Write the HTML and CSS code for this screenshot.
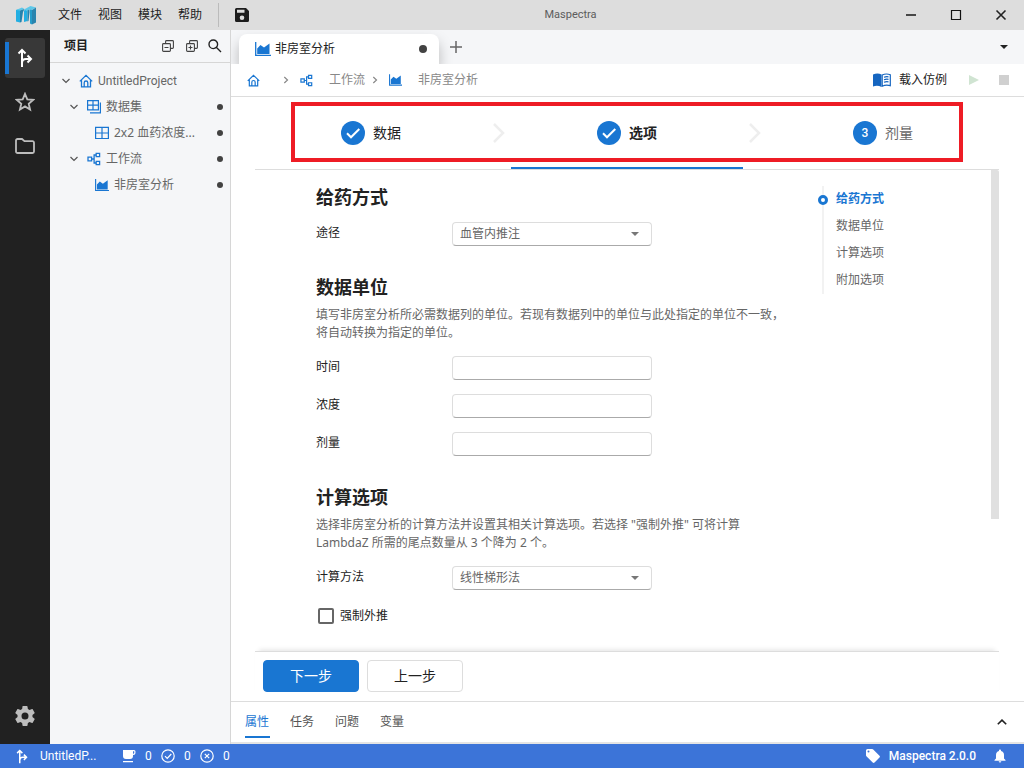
FILE: index.html
```html
<!DOCTYPE html>
<html lang="zh-CN">
<head>
<meta charset="utf-8">
<title>Maspectra</title>
<link rel="stylesheet" href="styles.css">
</head>
<body>
<svg class="defs" aria-hidden="true">
  <symbol id="home" viewBox="0 0 14 14"><path d="M.8 7.4 7 1.4l6.2 6M2.5 6.2v6.6h9V6.2M5.2 12.6V8.8a1.8 1.8 0 0 1 3.6 0v3.8" fill="none" stroke="currentColor" stroke-width="1.3"/></symbol>
  <symbol id="flow" viewBox="0 0 14 14"><path d="M1 5.200h3.600v3.600H1zM9.200 1.400h3.400v3.200H9.200zM9.200 9.400h3.400v3.200H9.200zM4.600 7h2.500M9.200 3H7.100v8h2.100" fill="none" stroke="currentColor" stroke-width="1.300"/></symbol>
  <symbol id="chart" viewBox="0 0 16 14"><path d="M.7 0v13.3H16" fill="none" stroke="currentColor" stroke-width="1.3"/><path d="M2.200 12V6.500L5.500 3 9 5.600 14.500 1.500V12z" fill="currentColor"/></symbol>
  <symbol id="fork" viewBox="0 0 16 20"><path d="M5 19V3M1.500 5.500 5 2l3.500 3.500M5 15c0-3 1-4 4-4h4M10.500 7.500 14 11l-3.500 3.500" fill="none" stroke="currentColor" stroke-width="2"/></symbol>
  <symbol id="caret" viewBox="0 0 8 8"><path d="M.5 2 4 5.500 7.500 2" fill="none" stroke="currentColor" stroke-width="1.2"/></symbol>
  <symbol id="tri" viewBox="0 0 8 4"><path d="M0 0h8L4 4z" fill="currentColor"/></symbol>
  <symbol id="check" viewBox="0 0 24 24"><path d="m6 12.300 4 4 8.300-8.300" fill="none" stroke="currentColor" stroke-width="2"/></symbol>
</svg>
<div class="app">
  <header class="titlebar">
    <svg class="logo" viewBox="0 0 20 19"><path d="M0 4 4 3v13.500L0 15.500z" fill="#22aee2"/><path d="M0 4 6 1.500 8.500 3 4 4.500z" fill="#5cc8ea"/><path d="M4 4.500 8.500 3 7 6 5.500 16 4 16.500z" fill="#2583ad"/><path d="M8 4.500 11.500 3v12L8 16z" fill="#22aee2"/><path d="M8 3.500 14.500 0l5.500 1.500-4.500 2.500-2-.5-2.500 1.500z" fill="#5cc8ea"/><path d="M11.500 4.500 13.500 3.500v3L12.500 15l-1 .5z" fill="#2583ad"/><path d="M14 3.500l2 .5v14.500l-2-1z" fill="#249cca"/><path d="M16 4 20 1.500v15L16 18.500z" fill="#2a84ae"/></svg>
    <nav class="menu">
      <button type="button">文件</button><button type="button">视图</button><button type="button">模块</button><button type="button">帮助</button>
    </nav>
    <button type="button" class="save" aria-label="保存"><svg viewBox="0 0 14 14" width="14" height="14"><path fill-rule="evenodd" fill="currentColor" d="M1.500 0H11l3 3v9.500a1.500 1.500 0 0 1-1.500 1.500h-11A1.500 1.500 0 0 1 0 12.500v-11A1.500 1.500 0 0 1 1.500 0zM2 1.700v3h7.500v-3zM7 7.500a2.300 2.300 0 1 0 0 4.600 2.300 2.300 0 0 0 0-4.600z"/></svg></button>
    <h1 class="title">Maspectra</h1>
    <div class="window">
      <button type="button" aria-label="最小化"><svg viewBox="0 0 12 12"><path d="M1 6h10" stroke="#222" stroke-width="1.600"/></svg></button>
      <button type="button" aria-label="最大化"><svg viewBox="0 0 12 12"><path d="M1.500 1.500h9v9h-9z" fill="none" stroke="#111" stroke-width="1.200"/></svg></button>
      <button type="button" aria-label="关闭"><svg viewBox="0 0 12 12"><path d="m1.500 1.500 9 9M10.500 1.500l-9 9" stroke="#222" stroke-width="1.600"/></svg></button>
    </div>
  </header>

  <div class="body">
    <nav class="rail">
      <button type="button" class="on" aria-label="项目"><svg width="16" height="20"><use href="#fork"/></svg></button>
      <button type="button" aria-label="收藏"><svg width="20" height="20" viewBox="2 2 20 20"><path d="m12 3.800 2.300 5.500 5.900.5-4.500 3.900 1.400 5.800-5.100-3.100-5.100 3.100 1.400-5.800-4.500-3.900 5.900-.5z" fill="none" stroke="currentColor" stroke-width="1.800"/></svg></button>
      <button type="button" aria-label="文件夹"><svg width="20" height="16" viewBox="0 0 20 16"><path d="M1 2.500A1.500 1.500 0 0 1 2.500 1H7l2.500 2.200h8A1.500 1.500 0 0 1 19 4.700v8.800a1.500 1.500 0 0 1-1.500 1.500h-15A1.500 1.500 0 0 1 1 13.500z" fill="none" stroke="currentColor" stroke-width="1.800"/></svg></button>
      <button type="button" class="gear" aria-label="设置"><svg width="24" height="24" viewBox="0 0 24 24"><path fill="currentColor" d="M19.430 12.980c.04-.32.07-.64.07-.98s-.03-.66-.07-.98l2.110-1.650c.19-.15.24-.42.12-.64l-2-3.460c-.12-.22-.39-.3-.61-.22l-2.490 1c-.52-.4-1.080-.73-1.690-.98l-.38-2.650A.49.49 0 0 0 14 2h-4c-.25 0-.46.18-.49.42l-.38 2.650c-.61.25-1.170.59-1.690.98l-2.490-1c-.23-.09-.49 0-.61.22l-2 3.460c-.13.22-.07.49.12.64l2.110 1.650c-.04.32-.07.65-.07.98s.03.66.07.98l-2.110 1.650c-.19.15-.24.42-.12.64l2 3.460c.12.22.39.3.61.22l2.490-1c.52.4 1.080.73 1.690.98l.38 2.650c.03.24.24.42.49.42h4c.25 0 .46-.18.49-.42l.38-2.650c.61-.25 1.170-.59 1.690-.98l2.490 1c.23.09.49 0 .61-.22l2-3.460c.12-.22.07-.49-.12-.64zM12 15.500a3.500 3.500 0 1 1 0-7 3.500 3.500 0 0 1 0 7z"/></svg></button>
    </nav>

    <aside class="side">
      <div class="side-head">
        <h2>项目</h2>
        <button type="button" aria-label="全部折叠"><svg width="12" height="12" viewBox="0 0 12 12"><path d="M1.500 3.600h6q.9 0 .9.900v6q0 .9-.9.900h-6q-.9 0-.9-.9v-6q0-.9.900-.9zM3.600 3.400V1.500q0-.9.900-.9h6q.9 0 .9.900v6q0 .9-.9.900H8.600M2.500 7.500h4" fill="none" stroke="currentColor" stroke-width="1.100"/></svg></button>
        <button type="button" aria-label="全部展开"><svg width="12" height="12" viewBox="0 0 12 12"><path d="M1.500 3.600h6q.9 0 .9.900v6q0 .9-.9.900h-6q-.9 0-.9-.9v-6q0-.9.900-.9zM3.600 3.400V1.500q0-.9.900-.9h6q.9 0 .9.900v6q0 .9-.9.900H8.600M2.500 7.500h4M4.500 5.500v4" fill="none" stroke="currentColor" stroke-width="1.100"/></svg></button>
        <button type="button" aria-label="搜索"><svg width="14" height="14" viewBox="0 0 14 14"><path d="m8.500 8.500 4.500 4.500M9.600 5.300a4.300 4.300 0 1 1-8.600 0 4.300 4.300 0 0 1 8.600 0z" fill="none" stroke="#222" stroke-width="1.400"/></svg></button>
      </div>
      <ul class="tree">
        <li class="lv0"><svg class="caret"><use href="#caret"/></svg><svg class="ic"><use href="#home"/></svg><span>UntitledProject</span></li>
        <li class="lv1"><svg class="caret"><use href="#caret"/></svg><svg class="ic" viewBox="0 0 14 14"><path d="M.6.6h10.800v9.300H.6zM.6 5.200h10.800M6 .6v9.300M13.400 2.500v10.300H3" fill="none" stroke="currentColor" stroke-width="1.200"/></svg><span>数据集</span><i class="dot"></i></li>
        <li class="lv2"><svg class="ic" viewBox="0 0 14 14"><path d="M.6 1.300h12.800v11.200H.6zM.6 7h12.800M7 1.300v11.200" fill="none" stroke="currentColor" stroke-width="1.200"/></svg><span class="mixed">2x2 血药浓度...</span><i class="dot"></i></li>
        <li class="lv1"><svg class="caret"><use href="#caret"/></svg><svg class="ic"><use href="#flow"/></svg><span>工作流</span><i class="dot"></i></li>
        <li class="lv2"><svg class="ic"><use href="#chart"/></svg><span>非房室分析</span><i class="dot"></i></li>
      </ul>
    </aside>

    <main class="main">
      <div class="tabs">
        <button type="button" class="tab"><svg width="16" height="14"><use href="#chart"/></svg><span>非房室分析</span><i class="dot"></i></button>
        <button type="button" class="add" aria-label="新建标签"><svg width="12" height="12" viewBox="0 0 12 12"><path d="M6 0v12M0 6h12" stroke="#666" stroke-width="1.500"/></svg></button>
        <button type="button" class="more" aria-label="更多标签"><svg width="8" height="4"><use href="#tri"/></svg></button>
      </div>

      <div class="crumbs">
        <a href="#" aria-label="主页"><svg width="13" height="13"><use href="#home"/></svg></a>
        <svg class="sep" viewBox="0 0 8 8"><path d="M2.300 1 5.500 4 2.300 7" fill="none" stroke="currentColor" stroke-width="1.200"/></svg>
        <a href="#"><svg width="13" height="13"><use href="#flow"/></svg><span>工作流</span></a>
        <svg class="sep" viewBox="0 0 8 8"><path d="M2.300 1 5.500 4 2.300 7" fill="none" stroke="currentColor" stroke-width="1.200"/></svg>
        <a href="#"><svg width="13" height="12"><use href="#chart"/></svg><span>非房室分析</span></a>
        <button type="button" class="load"><svg width="18" height="14" viewBox="0 0 18 14"><path d="M0 1.500Q4.500-.5 8.500 1.500V14Q4.500 11.800 0 13.500z" fill="#1565c0"/><path d="M9.200 2Q13 .2 17.300 1.700v11Q13 11.500 9.200 13.200zM11 4.200q2-.8 4.500-.4M11 6.700q2-.8 4.500-.4M11 9.200q2-.8 4.500-.4" fill="none" stroke="#1565c0" stroke-width="1.200"/></svg>载入仿例</button>
        <button type="button" aria-label="运行" disabled><svg width="10" height="10" viewBox="0 0 10 10"><path d="M0 0v10l10-5z" fill="#d0e4d2"/></svg></button>
        <button type="button" aria-label="停止" disabled><svg width="10" height="10" viewBox="0 0 10 10"><path d="M0 0h10v10H0z" fill="#d0d0d0"/></svg></button>
      </div>

      <section class="wizard">
        <ol class="steps">
          <li class="step"><b><svg width="24" height="24"><use href="#check"/></svg></b>数据</li>
          <li class="arrow"><svg width="12" height="20" viewBox="0 0 12 20"><path d="m1 1 9 9-9 9" fill="none" stroke="#eee" stroke-width="2.500"/></svg></li>
          <li class="step now"><b><svg width="24" height="24"><use href="#check"/></svg></b>选项</li>
          <li class="arrow"><svg width="12" height="20" viewBox="0 0 12 20"><path d="m1 1 9 9-9 9" fill="none" stroke="#eee" stroke-width="2.500"/></svg></li>
          <li class="step next"><b>3</b>剂量</li>
        </ol>
        <div class="highlight"></div>

        <div class="scroll">
          <form class="form">
            <section class="group">
              <h3>给药方式</h3>
              <div class="row"><label for="route">途径</label><div class="pick"><select id="route"><option>血管内推注</option></select><svg><use href="#tri"/></svg></div></div>
            </section>
            <section class="group">
              <h3>数据单位</h3>
              <p>填写非房室分析所必需数据列的单位。若现有数据列中的单位与此处指定的单位不一致，将自动转换为指定的单位。</p>
              <div class="row"><label for="time">时间</label><input type="text" id="time"></div>
              <div class="row"><label for="conc">浓度</label><input type="text" id="conc"></div>
              <div class="row"><label for="dose">剂量</label><input type="text" id="dose"></div>
            </section>
            <section class="group">
              <h3>计算选项</h3>
              <p>选择非房室分析的计算方法并设置其相关计算选项。若选择 "强制外推" 可将计算 LambdaZ 所需的尾点数量从 3 个降为 2 个。</p>
              <div class="row"><label for="method">计算方法</label><div class="pick"><select id="method"><option>线性梯形法</option></select><svg><use href="#tri"/></svg></div></div>
              <div class="row"><label class="tick"><input type="checkbox">强制外推</label></div>
            </section>
          </form>
          <nav class="anchors">
            <a href="#" class="on">给药方式</a><a href="#">数据单位</a><a href="#">计算选项</a><a href="#">附加选项</a>
          </nav>
          <div class="bar"><div class="thumb"></div></div>
        </div>

        <div class="actions"><button type="button" class="primary">下一步</button><button type="button">上一步</button></div>
      </section>

      <div class="panel">
        <button type="button" class="on">属性</button><button type="button">任务</button><button type="button">问题</button><button type="button">变量</button>
        <button type="button" class="up" aria-label="展开"><svg width="10" height="6" viewBox="0 0 10 6"><path d="m.8 5.300 4.200-4.200 4.200 4.200" fill="none" stroke="#222" stroke-width="1.600"/></svg></button>
      </div>
    </main>
  </div>

  <footer class="status">
    <svg width="12" height="15"><use href="#fork"/></svg><span class="name">UntitledP...</span>
    <svg width="14" height="14" viewBox="0 0 14 14"><path fill="currentColor" fill-rule="evenodd" d="M1 1h11a1.500 1.500 0 0 1 1.500 1.500v1A2.500 2.500 0 0 1 11 6v1a3 3 0 0 1-3 3H4a3 3 0 0 1-3-3zm10 1.200v2.600a1.200 1.200 0 0 0 1.300-1.200v-1a.5.500 0 0 0-.5-.4zM1 12h10v1.300H1z"/></svg><span class="num">0</span>
    <svg width="14" height="14" viewBox="0 0 14 14"><g fill="none" stroke="currentColor" stroke-width="1.200"><circle cx="7" cy="7" r="6.200"/><path d="m4 7.200 2.200 2.200L10.300 5"/></g></svg><span class="num">0</span>
    <svg width="14" height="14" viewBox="0 0 14 14"><g fill="none" stroke="currentColor" stroke-width="1.200"><circle cx="7" cy="7" r="6.200"/><path d="m4.800 4.800 4.400 4.400M9.200 4.800 4.800 9.200"/></g></svg><span class="num">0</span>
    <div class="right">
      <svg width="14" height="14" viewBox="0 0 14 14"><path fill="currentColor" fill-rule="evenodd" d="M1.500 0h4.700q.6 0 1 .4l6.300 6.300q.9.900 0 1.800l-5 5q-.9.900-1.800 0L.4 7.200Q0 6.800 0 6.200V1.500Q0 0 1.500 0zm1 1.500a1 1 0 1 0 0 2 1 1 0 0 0 0-2z"/></svg><span class="ver">Maspectra 2.0.0</span>
      <svg width="12" height="14" viewBox="0 0 12 14"><path fill="currentColor" d="M6 .5c.6 0 1 .4 1 1v.4c2 .5 3 2 3 4V9.500l1.500 1.500v.7H.5V11L2 9.500V5.900c0-2 1-3.500 3-4v-.4c0-.6.4-1 1-1zM4.700 12.300h2.600a1.300 1.300 0 0 1-2.600 0z"/></svg>
    </div>
  </footer>
</div>
</body>
</html>
```

FILE: styles.css
```css
*, *::before { box-sizing: border-box; }
body {
  margin: 0;
  font: 12px/18px Roboto, "Noto Sans CJK SC", sans-serif;
  color: #222;
  background: #fff;
}
button { font: inherit; color: inherit; background: none; border: 0; padding: 0; }
button, a { display: flex; align-items: center; }
a { color: inherit; text-decoration: none; }
h1, h2, h3, p, ul, ol { margin: 0; padding: 0; list-style: none; }
svg { flex: none; display: block; }
.defs { position: absolute; width: 0; height: 0; }
.dot { flex: none; width: 6px; height: 6px; border-radius: 50%; background: #424242; }

.app { display: flex; flex-direction: column; height: 100vh; }
.body { flex: 1; display: flex; min-height: 0; }

.titlebar { display: flex; align-items: center; height: 30px; background: #ddd; }
.logo { width: 20px; height: 19px; margin: 0 22px 0 16px; }
.menu { display: flex; gap: 16px; padding-right: 16px; }
.save { height: 24px; padding: 0 4px 0 16px; border-left: 1px solid #bbb; color: #1c1c1c; }
.title { flex: 1; text-align: center; font-size: 11px; font-weight: 400; color: #5c5c5c; }
.window { display: flex; padding-right: 1px; }
.window button { width: 45px; height: 30px; justify-content: center; }
.window svg { width: 12px; height: 12px; }

.rail { display: flex; flex-direction: column; gap: 4px; width: 50px; padding: 8px 5px; background: #212121; color: #bdbdbd; }
.rail button { width: 40px; height: 40px; justify-content: center; border-radius: 3px; }
.rail .on { position: relative; background: #383838; color: #fff; }
.rail .on::before { content: ""; position: absolute; left: 0; top: 4px; width: 4px; height: 32px; background: #1976d2; }
.rail .gear { margin-top: auto; }

.side { width: 181px; background: #f5f6f8; border-right: 1px solid #d6d6d6; }
.side-head { display: flex; align-items: center; gap: 12px; height: 33px; padding: 0 8px 0 14px; border-bottom: 1px solid #d6d6d6; color: #424242; }
.side-head h2 { flex: 1; font-size: 12px; font-weight: 700; color: #222; }
.side-head button:last-child { margin-left: -2px; }
.tree { padding: 5px 7px 0 12px; color: #666; }
.tree li { display: flex; align-items: center; height: 26px; }
.tree span { flex: 1; white-space: nowrap; padding-left: 5px; }
.tree .mixed, .group p { font-family: "Noto Sans", "Noto Sans CJK SC", sans-serif; }
.tree .ic { width: 14px; height: 14px; color: #1976d2; }
.tree .caret { width: 8px; height: 8px; margin-right: 9px; color: #555; }
.tree .lv1 { padding-left: 8px; }
.tree .lv2 { padding-left: 33px; }

.main { flex: 1; display: flex; flex-direction: column; min-width: 0; }
.tabs { display: flex; align-items: center; height: 34px; padding: 0 16px 0 8px; background: #f5f6f8; overflow: hidden; }
.tab { align-self: flex-end; width: 200px; height: 30px; padding: 0 12px 0 16px; gap: 4px; border-radius: 8px 8px 0 0; background: #fff; box-shadow: 0 8px 14px rgba(0, 0, 0, .25); }
.tab svg { color: #1976d2; }
.tab span { flex: 1; text-align: left; }
.tab .dot { width: 8px; height: 8px; }
.add { margin-left: 11px; }
.more { margin-left: auto; }

.crumbs { display: flex; align-items: center; height: 33px; padding: 0 15px 0 16px; border-bottom: 1px solid #ddd; color: #888; }
.crumbs a { gap: 16px; }
.crumbs a svg { color: #1976d2; }
.crumbs .sep { width: 8px; height: 8px; margin: 0 10px 0 6px; }
.crumbs a:first-child { padding-right: 16px; }
.crumbs button { margin-left: 20px; }
.crumbs .load { gap: 8px; margin-left: auto; color: #222; }
.crumbs .load + button { margin-left: 22px; }

.wizard { position: relative; flex: 1; display: flex; flex-direction: column; min-height: 0; padding: 0 25px 0 24px; }
.steps { display: flex; height: 73px; border-bottom: 1px solid #ddd; font-size: 14px; }
.step { flex: 1; display: flex; align-items: center; justify-content: center; gap: 8px; border-bottom: 2px solid transparent; border-top: 2px solid transparent; }
.step b { display: flex; align-items: center; justify-content: center; width: 24px; height: 24px; border-radius: 50%; background: #1976d2; color: #fff; font-size: 12px; font-weight: 500; }
.now { border-bottom-color: #1976d2; font-weight: 700; }
.next { color: #666; }
.arrow { display: flex; align-items: center; justify-content: center; width: 24px; }
.highlight { position: absolute; left: 60px; right: 61px; top: 5px; height: 60px; border: 4px solid #ee1c25; pointer-events: none; }

.scroll { flex: 1; display: flex; min-height: 0; overflow: hidden; }
.form { width: 533px; padding: 16px 0 0 61px; }
.group { margin-bottom: 30px; }
.group h3 { font-size: 18px; line-height: 24px; font-weight: 700; }
.group p { margin: 6px 0 14px; color: #666; }
.row { display: flex; align-items: flex-start; height: 24px; margin-bottom: 14px; line-height: 22px; }
.row > label:first-child { width: 136px; }
h3 + .row { margin-top: 12px; }
.row input[type="text"], select { width: 200px; height: 24px; padding: 0 7px; border: 1px solid #ddd; border-bottom-color: #aaa; border-radius: 4px; background: #fff; font: inherit; color: #666; }
select { appearance: none; padding-bottom: 2px; }
.pick { position: relative; }
.pick svg { position: absolute; right: 13px; top: 10px; width: 8px; height: 4px; color: #777; pointer-events: none; }
.row > .tick:first-child { display: flex; align-items: center; gap: 6px; height: 24px; padding-left: 2px; }
.tick input { appearance: none; width: 16px; height: 16px; margin: 0; border: 2px solid #666; border-radius: 2px; }

.anchors { align-self: flex-start; margin: 16px auto 0 34px; border-left: 2px solid #f2f2f2; color: #666; }
.anchors a { position: relative; height: 27px; padding: 0 0 2px 12px; }
.anchors .on { font-weight: 700; color: #1976d2; }
.anchors .on::before { content: ""; position: absolute; left: -6px; top: 9px; width: 10px; height: 10px; border: 3px solid #1976d2; border-radius: 50%; background: #fff; }
.bar { width: 8px; }
.thumb { height: 349px; background: #e0e0e0; border-radius: 0 2px 0 0; }

.actions { display: flex; gap: 8px; padding: 8px 8px 9px; border-top: 1px solid #ddd; box-shadow: 0 -5px 5px -4px rgba(0, 0, 0, .12); font-size: 14px; }
.actions button { justify-content: center; width: 96px; height: 32px; border: 1px solid #ddd; border-radius: 4px; }
.actions .primary { background: #1976d2; border-color: #1976d2; color: #fff; }

.panel { display: flex; gap: 20px; height: 43px; padding: 0 17px 0 14px; border-top: 1px solid #ddd; border-bottom: 2px solid #e4e4e4; color: #555; }
.panel button { min-width: 25px; height: 36px; padding-top: 6px; border-bottom: 2px solid transparent; }
.panel .on { color: #1976d2; border-bottom-color: #1976d2; }
.panel .up { justify-content: flex-end; min-width: 10px; height: 40px; padding: 0; margin-left: auto; border: 0; }

.status { display: flex; align-items: center; height: 24px; padding: 0 18px 0 16px; background: #3c74d8; color: #fff; }
.name { width: 62px; margin: 0 20px 0 12px; white-space: nowrap; }
.num { width: 7px; margin: 0 9px; }
.right { display: flex; align-items: center; margin-left: auto; }
.ver { margin: 0 18px 0 9px; font-weight: 500; }
```
